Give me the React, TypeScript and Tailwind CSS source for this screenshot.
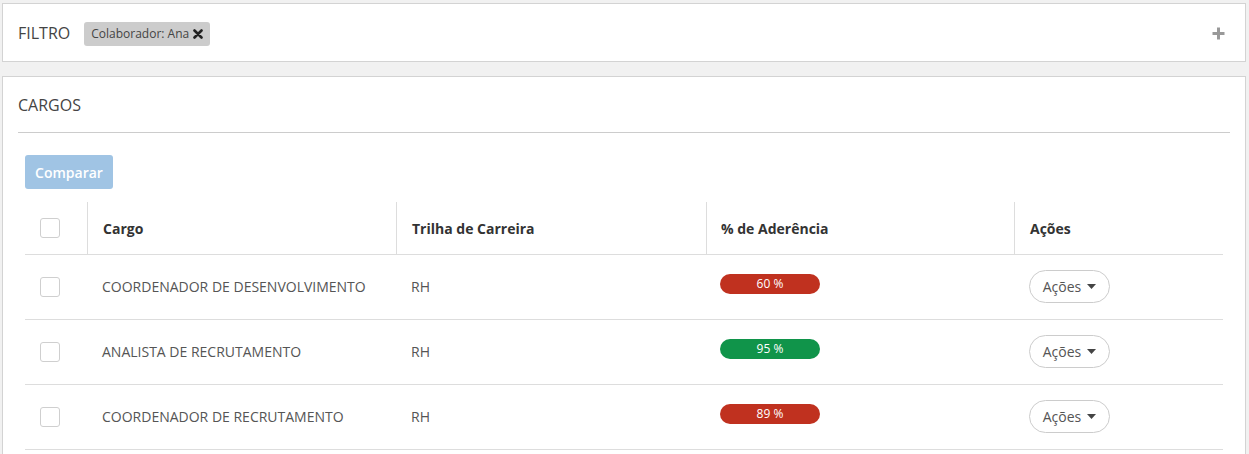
import React from 'react';

type Row = { cargo: string; trilha: string; aderencia: number; ok: boolean };

const rows: Row[] = [
  { cargo: 'COORDENADOR DE DESENVOLVIMENTO', trilha: 'RH', aderencia: 60, ok: false },
  { cargo: 'ANALISTA DE RECRUTAMENTO', trilha: 'RH', aderencia: 95, ok: true },
  { cargo: 'COORDENADOR DE RECRUTAMENTO', trilha: 'RH', aderencia: 89, ok: false },
];

const Checkbox = () => (
  <span className="block h-[20px] w-[20px] rounded-[3px] border border-[#cfcfcf] bg-white" />
);

const Caret = () => (
  <svg width="9" height="5" viewBox="0 0 9 5" className="ml-[6px]">
    <path d="M0 0 H9 L4.5 5 Z" fill="#444" />
  </svg>
);

const AcoesButton = () => (
  <button className="flex h-[33px] w-[81px] items-center justify-center rounded-full border border-[#cccccc] bg-white text-[14px] text-[#555]">
    Ações
    <Caret />
  </button>
);

export default function App() {
  return (
    <div className="min-h-screen bg-[#f1f1f1] pl-[2px] pr-[3px] pt-[3px] font-['Open_Sans',sans-serif]">
      {/* Filtro */}
      <div className="flex h-[59px] items-center border border-[#d3d3d3] bg-white pl-[15px] pr-[20px]">
        <span className="text-[16px] text-[#444]">FILTRO</span>
        <span className="ml-[14px] mt-[2px] flex h-[24px] items-center rounded-[3px] bg-[#cccccc] px-[7px] text-[12px] text-[#444]">
          Colaborador: Ana
          <svg width="10" height="10" viewBox="0 0 10 10" className="ml-[4px]">
            <path d="M1.5 1.5 L8.5 8.5 M8.5 1.5 L1.5 8.5" stroke="#222" strokeWidth="2.6" strokeLinecap="round" />
          </svg>
        </span>
        <svg width="13" height="13" viewBox="0 0 13 13" className="ml-auto mt-[2px]">
          <path d="M6.5 0.5 V12.5 M0.5 6.5 H12.5" stroke="#999" strokeWidth="3" />
        </svg>
      </div>

      {/* Cargos */}
      <div className="mt-[14px] border border-[#d3d3d3] bg-white px-[15px] pb-[20px]">
        <div className="flex h-[56px] items-center border-b border-[#cccccc]">
          <span className="text-[16px] text-[#444]">CARGOS</span>
        </div>
        <div className="px-[7px] pt-[22px]">
          <button className="h-[34px] w-[88px] rounded-[3px] bg-[#a0c4e4] text-[14px] font-semibold text-white">
            Comparar
          </button>

          <div className="mt-[13px]">
            <div className="grid h-[53px] grid-cols-[62px_309px_310px_308px_1fr] border-b border-[#dddddd] text-[14px] font-bold text-[#333]">
              <div className="flex items-center pl-[15px]">
                <Checkbox />
              </div>
              <div className="flex items-center border-l border-[#dddddd] pl-[15px]">Cargo</div>
              <div className="flex items-center border-l border-[#dddddd] pl-[15px]">Trilha de Carreira</div>
              <div className="flex items-center border-l border-[#dddddd] pl-[14px]">% de Aderência</div>
              <div className="flex items-center border-l border-[#dddddd] pl-[15px]">Ações</div>
            </div>

            {rows.map((r) => (
              <div
                key={r.cargo}
                className="grid h-[65px] grid-cols-[62px_309px_310px_308px_1fr] border-b border-[#dddddd] text-[14px] text-[#555]"
              >
                <div className="flex items-center pl-[15px]">
                  <Checkbox />
                </div>
                <div className="flex items-center pb-[2px] pl-[15px]">{r.cargo}</div>
                <div className="flex items-center pb-[2px] pl-[15px]">{r.trilha}</div>
                <div className="flex items-center pb-[6px] pl-[14px]">
                  <span
                    className={`flex h-[20px] w-[100px] items-center justify-center rounded-full text-[12px] font-medium text-white ${
                      r.ok ? 'bg-[#10944a]' : 'bg-[#c0311f]'
                    }`}
                  >
                    {r.aderencia} %
                  </span>
                </div>
                <div className="flex items-center pb-[1px] pl-[15px]">
                  <AcoesButton />
                </div>
              </div>
            ))}
          </div>
        </div>
      </div>
    </div>
  );
}
